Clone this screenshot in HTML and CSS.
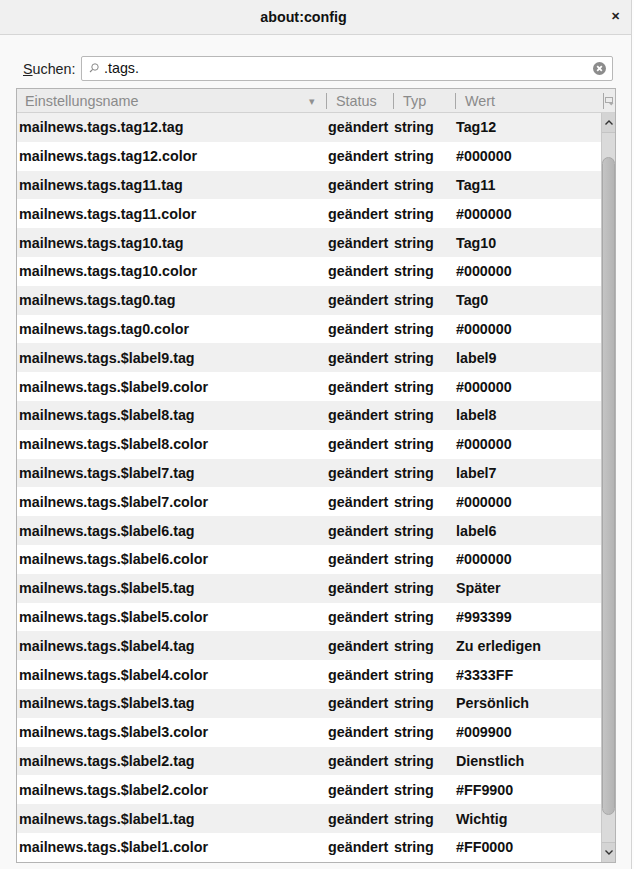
FILE: index.html
```html
<!DOCTYPE html>
<html>
<head>
  <title>about:config</title>
  <meta name="viewport" content="width=device-width, initial-scale=1">
  <link rel="stylesheet" href="styles.css">
</head>
<body>
  <div class="window">
    <header class="titlebar">
      <span class="title">about:config</span>
      <span class="close">&#x2715;</span>
    </header>

    <div class="content">
      <div class="search-row">
        <label class="search-label"><u>S</u>uchen:</label>
        <div class="search-box">
          <svg class="search-icon" width="10" height="10" viewBox="0 0 10 10">
            <circle cx="6" cy="4" r="3.2" fill="none" stroke="#888" stroke-width="1"/>
            <line x1="3.7" y1="6.3" x2="1" y2="9" stroke="#888" stroke-width="1.1"/>
          </svg>
          <span class="search-text">.tags.</span>
          <svg class="search-clear" width="13" height="13" viewBox="0 0 13 13">
            <circle cx="6.5" cy="6.5" r="6.5" fill="#8c8c8c"/>
            <path d="M4.2 4.2 L8.8 8.8 M8.8 4.2 L4.2 8.8" stroke="#fff" stroke-width="1.8"/>
          </svg>
        </div>
      </div>

      <div class="tree">
        <div class="tree-head">
          <div class="col-head col-name">Einstellungsname <span class="sort">&#x25BE;</span></div>
          <div class="col-head">Status</div>
          <div class="col-head">Typ</div>
          <div class="col-head">Wert</div>
          <div class="col-picker">
            <svg width="9" height="9" viewBox="0 0 9 9">
              <rect x="0.5" y="0.5" width="7" height="5" fill="none" stroke="#aaa"/>
              <path d="M4 6 L8.5 6 L6.25 8.5 Z" fill="#aaa"/>
            </svg>
          </div>
        </div>

        <div class="tree-body">
          <div class="rows">
            <div class="row"><span>mailnews.tags.tag12.tag</span><span>geändert</span><span>string</span><span>Tag12</span></div>
            <div class="row"><span>mailnews.tags.tag12.color</span><span>geändert</span><span>string</span><span>#000000</span></div>
            <div class="row"><span>mailnews.tags.tag11.tag</span><span>geändert</span><span>string</span><span>Tag11</span></div>
            <div class="row"><span>mailnews.tags.tag11.color</span><span>geändert</span><span>string</span><span>#000000</span></div>
            <div class="row"><span>mailnews.tags.tag10.tag</span><span>geändert</span><span>string</span><span>Tag10</span></div>
            <div class="row"><span>mailnews.tags.tag10.color</span><span>geändert</span><span>string</span><span>#000000</span></div>
            <div class="row"><span>mailnews.tags.tag0.tag</span><span>geändert</span><span>string</span><span>Tag0</span></div>
            <div class="row"><span>mailnews.tags.tag0.color</span><span>geändert</span><span>string</span><span>#000000</span></div>
            <div class="row"><span>mailnews.tags.$label9.tag</span><span>geändert</span><span>string</span><span>label9</span></div>
            <div class="row"><span>mailnews.tags.$label9.color</span><span>geändert</span><span>string</span><span>#000000</span></div>
            <div class="row"><span>mailnews.tags.$label8.tag</span><span>geändert</span><span>string</span><span>label8</span></div>
            <div class="row"><span>mailnews.tags.$label8.color</span><span>geändert</span><span>string</span><span>#000000</span></div>
            <div class="row"><span>mailnews.tags.$label7.tag</span><span>geändert</span><span>string</span><span>label7</span></div>
            <div class="row"><span>mailnews.tags.$label7.color</span><span>geändert</span><span>string</span><span>#000000</span></div>
            <div class="row"><span>mailnews.tags.$label6.tag</span><span>geändert</span><span>string</span><span>label6</span></div>
            <div class="row"><span>mailnews.tags.$label6.color</span><span>geändert</span><span>string</span><span>#000000</span></div>
            <div class="row"><span>mailnews.tags.$label5.tag</span><span>geändert</span><span>string</span><span>Später</span></div>
            <div class="row"><span>mailnews.tags.$label5.color</span><span>geändert</span><span>string</span><span>#993399</span></div>
            <div class="row"><span>mailnews.tags.$label4.tag</span><span>geändert</span><span>string</span><span>Zu erledigen</span></div>
            <div class="row"><span>mailnews.tags.$label4.color</span><span>geändert</span><span>string</span><span>#3333FF</span></div>
            <div class="row"><span>mailnews.tags.$label3.tag</span><span>geändert</span><span>string</span><span>Persönlich</span></div>
            <div class="row"><span>mailnews.tags.$label3.color</span><span>geändert</span><span>string</span><span>#009900</span></div>
            <div class="row"><span>mailnews.tags.$label2.tag</span><span>geändert</span><span>string</span><span>Dienstlich</span></div>
            <div class="row"><span>mailnews.tags.$label2.color</span><span>geändert</span><span>string</span><span>#FF9900</span></div>
            <div class="row"><span>mailnews.tags.$label1.tag</span><span>geändert</span><span>string</span><span>Wichtig</span></div>
            <div class="row"><span>mailnews.tags.$label1.color</span><span>geändert</span><span>string</span><span>#FF0000</span></div>
          </div>

          <div class="scrollbar">
            <div class="scroll-btn">
              <svg width="8" height="5" viewBox="0 0 8 5"><path d="M0.5 4.5 L4 1 L7.5 4.5" fill="none" stroke="#333" stroke-width="1.4"/></svg>
            </div>
            <div class="scroll-track">
              <div class="scroll-thumb"></div>
            </div>
            <div class="scroll-btn">
              <svg width="8" height="5" viewBox="0 0 8 5"><path d="M0.5 0.5 L4 4 L7.5 0.5" fill="none" stroke="#333" stroke-width="1.4"/></svg>
            </div>
          </div>
        </div>
      </div>
    </div>
  </div>
</body>
</html>
```

FILE: styles.css
```css
* {
  box-sizing: border-box;
  margin: 0;
  padding: 0;
}

body {
  font-family: "Liberation Sans", Arial, sans-serif;
  font-size: 14px;
  background-color: #fdfdfd;
  color: #111;
}

.window {
  width: 632px;
  height: 869px;
  background-color: #f9f9f9;
  border-right: 1px solid #d4d4d4;
}

/* title bar */
.titlebar {
  height: 35px;
  display: flex;
  align-items: center;
  justify-content: center;
  position: relative;
  padding-right: 24px;
  background-color: #f0f0f0;
  border-bottom: 1px solid #d6d6d6;
}

.title {
  font-weight: bold;
  font-size: 14.3px;
  color: #111;
}

.close {
  position: absolute;
  right: 11px;
  top: 10px;
  font-size: 11px;
  font-weight: bold;
  color: #222;
}

.content {
  padding: 21px 0 0 16px;
}

/* search */
.search-row {
  display: flex;
  align-items: center;
  height: 25px;
  margin-bottom: 7px;
}

.search-label {
  width: 65px;
  padding-left: 7px;
  font-size: 14.3px;
  color: #222;
}

.search-box {
  width: 532px;
  height: 25px;
  display: flex;
  align-items: center;
  background-color: #fff;
  border: 1px solid #b8b8b8;
  border-radius: 2px;
  padding: 0 6px 1px 7px;
  font-size: 14.3px;
}

.search-icon {
  margin-right: 5px;
}

.search-text {
  flex: 1;
  color: #111;
}

/* tree */
.tree {
  width: 600px;
  height: 775px;
  border: 1px solid #b4b4b4;
  background-color: #fff;
  display: flex;
  flex-direction: column;
}

.tree-head {
  display: grid;
  grid-template-columns: 309px 67px 62px 148px 12px;
  height: 24px;
  background-color: #ececec;
  border-bottom: 1px solid #d2d2d2;
  color: #8a8a8a;
  font-size: 14.4px;
}

.col-head {
  display: flex;
  align-items: center;
  padding-left: 9px;
  border-left: 1px solid #a8a8a8;
  margin: 4px 0;
}

.col-head.col-name {
  border-left: none;
  padding-left: 8px;
  padding-right: 11px;
  justify-content: space-between;
}

.sort {
  font-size: 11px;
  color: #909090;
}

.col-picker {
  display: flex;
  align-items: center;
  justify-content: center;
  border-left: 1px solid #a8a8a8;
  margin: 4px 0;
}

.tree-body {
  flex: 1;
  display: flex;
}

.rows {
  flex: 1;
}

.row {
  display: grid;
  grid-template-columns: 309px 67px 62px 1fr;
  height: 28.8px;
  align-items: center;
  font-weight: bold;
  font-size: 14.3px;
  color: #111;
}

.row:nth-child(odd) {
  background-color: #f0f0f0;
}

.row span:nth-child(1) {
  padding-left: 2px;
}

.row span:nth-child(2) {
  padding-left: 2px;
}

.row span:nth-child(3),
.row span:nth-child(4) {
  padding-left: 1px;
}

/* scrollbar */
.scrollbar {
  width: 14px;
  display: flex;
  flex-direction: column;
  background-color: #dadada;
  border-left: 1px solid #c8c8c8;
}

.scroll-btn {
  height: 20px;
  display: flex;
  align-items: center;
  justify-content: center;
  background-color: #d4d4d4;
}

.scroll-btn:first-child {
  border-bottom: 1px solid #c4c4c4;
}

.scroll-btn:last-child {
  border-top: 1px solid #c4c4c4;
}

.scroll-track {
  flex: 1;
  padding: 24px 0 27px;
}

.scroll-thumb {
  height: 100%;
  border-radius: 7px;
  background: linear-gradient(to right, #c4c4c4, #b4b4b4);
  border: 1px solid #a8a8a8;
}
```
